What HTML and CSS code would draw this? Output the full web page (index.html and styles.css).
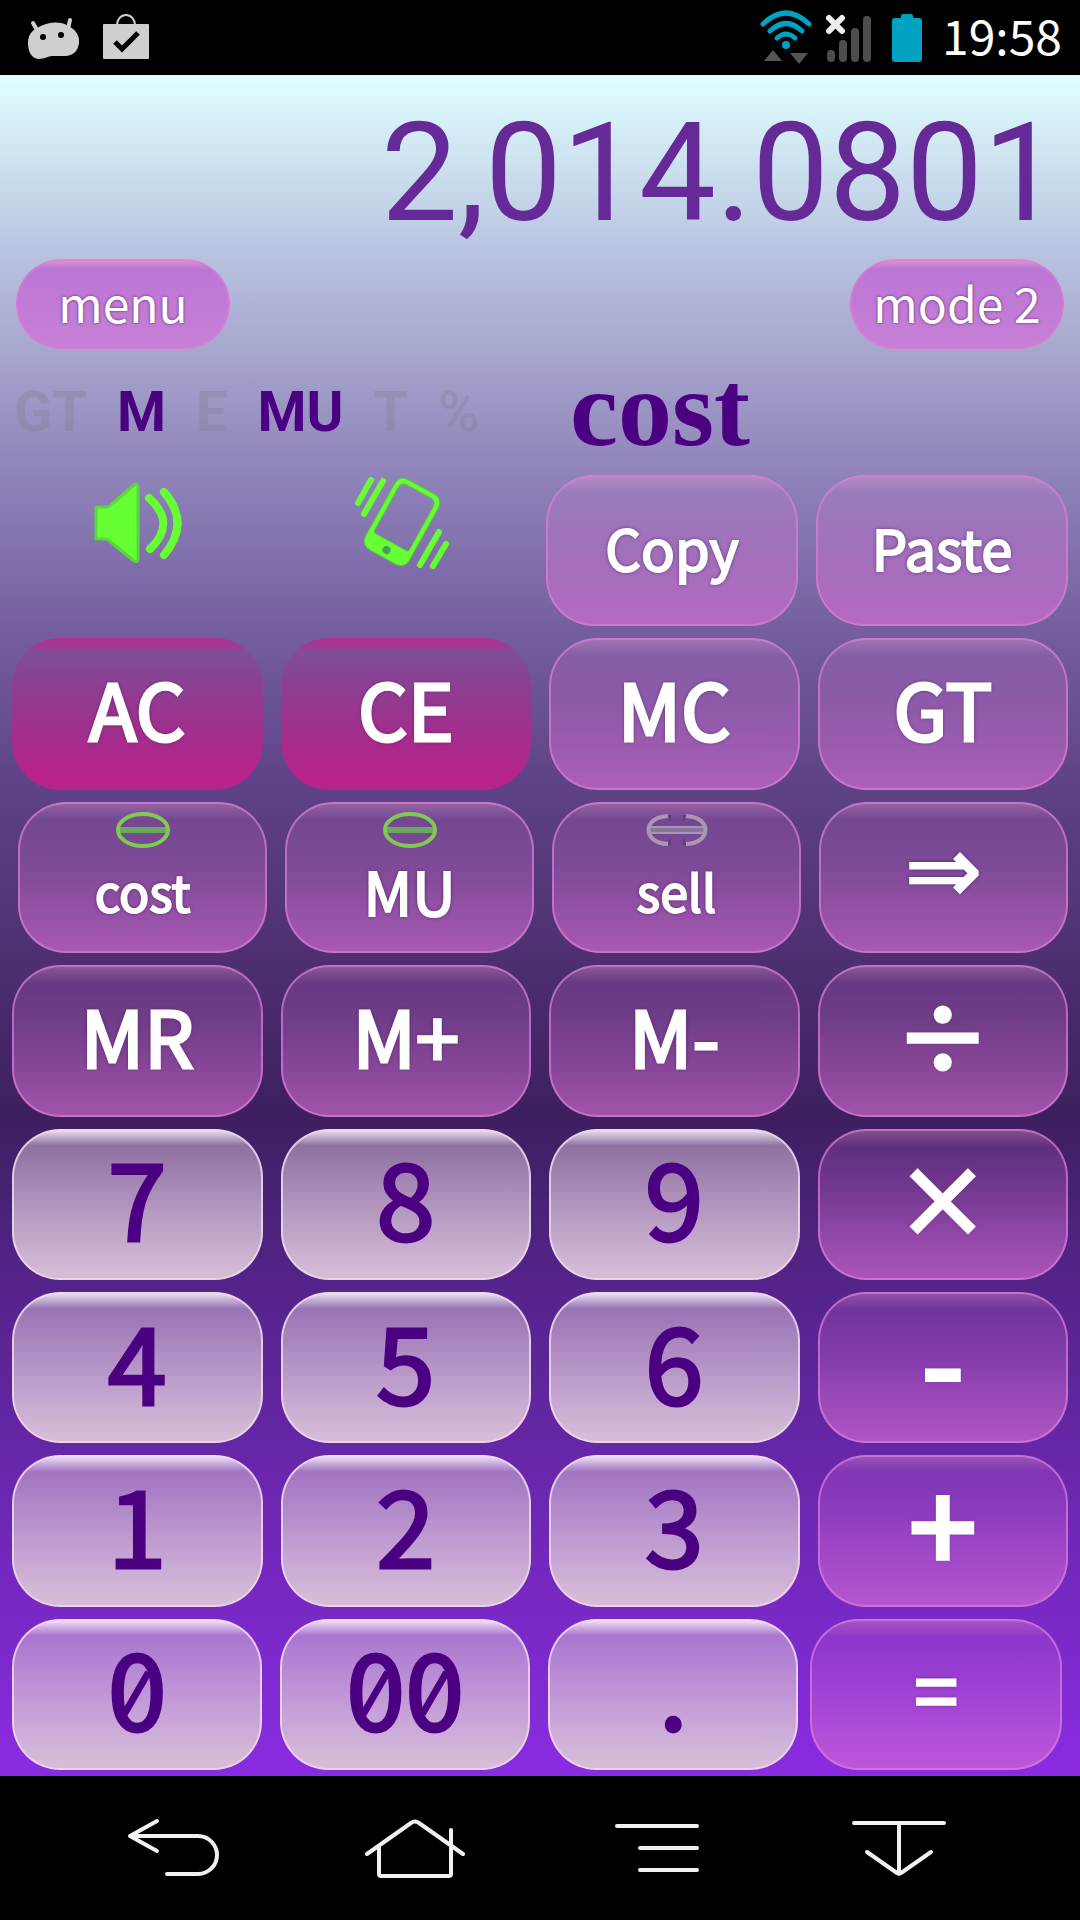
FILE: index.html
```html
<!DOCTYPE html>
<html lang="en">
<head>
    <meta charset="UTF-8">
    <meta name="viewport" content="width=device-width, initial-scale=1.0">
    <title>Calculator</title>
    <link rel="stylesheet" href="styles.css">
</head>
<body>
    <header class="status-bar">
        <div class="status-group">
            <svg width="54" height="42" viewBox="0 0 54 42">
                <path d="M7 6l4 7M44 3l-2 9" stroke="#cfcfcf" stroke-width="4" stroke-linecap="round"/>
                <path d="M2 26C2 16 8 12 15 9c8-4 20-5 27 0 7 3 12 9 11 17-1 8-6 13-14 13H26c-4 0-6 3-14 3C5 41 2 34 2 26z" fill="#cfcfcf"/>
                <circle cx="17" cy="20" r="3"/>
                <circle cx="35" cy="18" r="3"/>
            </svg>
            <svg width="48" height="52" viewBox="0 0 48 52">
                <path d="M15 13a9 10 0 0 1 18 0" fill="none" stroke="#cfcfcf" stroke-width="2"/>
                <rect x="1" y="12" width="46" height="35" rx="1" fill="#cfcfcf"/>
                <path d="M13 30l7 7 16-16" fill="none" stroke="#000" stroke-width="5"/>
            </svg>
        </div>
        <div class="status-group">
            <svg width="52" height="56" viewBox="0 0 52 56">
                <g fill="none" stroke="#00a2c2" stroke-width="5" stroke-linecap="round">
                    <path d="M3 14q23-22 46 0"/>
                    <path d="M10 21q16-15 32 0"/>
                    <path d="M17 28q9-8 18 0"/>
                </g>
                <circle cx="26" cy="35" r="4" fill="#00a2c2"/>
                <path d="M4 51l9-11 9 11zM30 43h18l-9 11z" fill="#555"/>
            </svg>
            <svg width="48" height="50" viewBox="0 0 48 50">
                <path d="M5 41v4M17 31v14M29 19v26M41 7v38" stroke="#4d4d4d" stroke-width="8" stroke-linecap="round"/>
                <path d="M3 5l13 13M16 5L3 18" stroke="#eee" stroke-width="6" stroke-linecap="round"/>
            </svg>
            <svg class="battery" width="30" height="48" viewBox="0 0 30 48">
                <rect x="9" width="12" height="8" rx="2" fill="#00a2c2"/>
                <rect y="4" width="30" height="44" rx="3" fill="#00a2c2"/>
            </svg>
            <time class="clock">19:58</time>
        </div>
    </header>

    <main class="calculator">
        <output class="display">2,014.0801</output>

        <div class="toolbar">
            <button class="pill">menu</button>
            <button class="pill">mode 2</button>
        </div>

        <div class="info">
            <div class="flags">
                <span>GT</span>
                <span class="on">M</span>
                <span>E</span>
                <span class="on">MU</span>
                <span>T</span>
                <span class="percent">%</span>
            </div>
            <div class="mode-name">cost</div>
        </div>

        <div class="keypad">
            <div class="row row-tools">
                <button class="toggle" aria-label="Sound">
                    <svg width="104" height="96" viewBox="-8 0 104 96">
                        <path d="M8 32h10q3 0 6-3L46 10q4-2 4 2v72q0 4-4 2L24 68q-4-4-7-4H8z" fill="#66ff33" stroke="#5cd63f" stroke-width="3" stroke-linejoin="round"/>
                        <path d="M61 23q28 25 1 51M76 17q27 31 0 63" fill="none" stroke="#66ff33" stroke-width="8" stroke-linecap="round"/>
                    </svg>
                </button>
                <button class="toggle" aria-label="Vibration">
                    <svg width="98" height="96" viewBox="0 0 98 96">
                        <g transform="translate(49 47) rotate(29)">
                            <path fill-rule="evenodd" fill="#66ff33" stroke="#5bc83f" stroke-width="1" d="M-14-40h28q11 0 11 11v58q0 11-11 11h-28q-11 0-11-11v-58q0-11 11-11zM-13-35q-7 0-7 7v48q0 3 3 3h34q3 0 3-3v-48q0-7-7-7z"/>
                            <circle cy="32" r="4" fill="#4f9a56"/>
                        </g>
                        <path d="M18 5L5 28M30 6L11 39M86 57L67 90M93 69L80 91" stroke="#66ff33" stroke-width="6" stroke-linecap="round"/>
                    </svg>
                </button>
                <button class="key key-word">Copy</button>
                <button class="key key-word">Paste</button>
            </div>

            <div class="row">
                <button class="key key-clear">AC</button>
                <button class="key key-clear">CE</button>
                <button class="key">MC</button>
                <button class="key">GT</button>
            </div>

            <div class="row row-business">
                <button class="key key-lamp">
                    <svg width="54" height="36" viewBox="0 0 54 36">
                        <path d="M3 18h48" stroke="#69a960" stroke-width="6"/>
                        <ellipse cx="27" cy="18" rx="25" ry="16" fill="none" stroke="#7fca51" stroke-width="4"/>
                    </svg>
                    <span class="small">cost</span>
                </button>
                <button class="key key-lamp">
                    <svg width="54" height="36" viewBox="0 0 54 36">
                        <path d="M3 18h48" stroke="#69a960" stroke-width="6"/>
                        <ellipse cx="27" cy="18" rx="25" ry="16" fill="none" stroke="#7fca51" stroke-width="4"/>
                    </svg>
                    <span>MU</span>
                </button>
                <button class="key key-lamp">
                    <svg width="62" height="36" viewBox="0 0 62 36">
                        <path d="M4 18h54" stroke="#8d749e" stroke-width="7"/>
                        <path d="M4 15h54M4 21h54" stroke="#a795b1" stroke-width="2"/>
                        <path d="M21 4h3v5M38 9V4h3M21 32h3v-5M38 27v5h3" fill="none" stroke="#5f3d78" stroke-width="2"/>
                        <path d="M22 4C-4 5-4 31 22 32M40 4c26 1 26 27 0 28" fill="none" stroke="#aa98b0" stroke-width="4"/>
                    </svg>
                    <span class="small">sell</span>
                </button>
                <button class="key key-arrow">⇒</button>
            </div>

            <div class="row">
                <button class="key">MR</button>
                <button class="key">M+</button>
                <button class="key">M-</button>
                <button class="key key-op">÷</button>
            </div>

            <div class="row">
                <button class="key key-digit">7</button>
                <button class="key key-digit">8</button>
                <button class="key key-digit">9</button>
                <button class="key key-op">×</button>
            </div>

            <div class="row">
                <button class="key key-digit">4</button>
                <button class="key key-digit">5</button>
                <button class="key key-digit">6</button>
                <button class="key key-op key-sign">-</button>
            </div>

            <div class="row">
                <button class="key key-digit">1</button>
                <button class="key key-digit">2</button>
                <button class="key key-digit">3</button>
                <button class="key key-op key-sign">+</button>
            </div>

            <div class="row row-last">
                <div class="digits">
                    <button class="key key-digit"><span class="zero">0</span></button>
                    <button class="key key-digit"><span class="zero">0</span><span class="zero">0</span></button>
                    <button class="key key-digit">.</button>
                </div>
                <button class="key">=</button>
            </div>
        </div>
    </main>

    <nav class="nav-bar">
        <button class="nav-btn" aria-label="Back">
            <svg width="92" height="60" viewBox="0 0 92 60">
                <path d="M30 3L3 18l27 15M3 18h68a19 19 0 0 1 0 38H40"/>
            </svg>
        </button>
        <button class="nav-btn" aria-label="Home">
            <svg width="100" height="60" viewBox="0 0 100 60">
                <path d="M2 36L46 5q4-3 8 0l44 31M14 29v27q0 2 2 2h68q2 0 2-2V12"/>
            </svg>
        </button>
        <button class="nav-btn" aria-label="Menu">
            <svg width="84" height="52" viewBox="0 0 84 52">
                <path d="M2 4h80M25 26h57M25 48h57"/>
            </svg>
        </button>
        <button class="nav-btn" aria-label="Hide">
            <svg width="94" height="58" viewBox="0 0 94 58">
                <path d="M2 4h90M47 4v51M15 33l30 21q2 1 4 0l30-21"/>
            </svg>
        </button>
    </nav>
</body>
</html>
```
FILE: styles.css
```css
* {
    box-sizing: border-box;
}

body {
    margin: 0;
    min-height: 100vh;
    display: flex;
    flex-direction: column;
    background-color: #000;
    font-family: "Noto Sans CJK JP", sans-serif;
    color: #fff;
}

button {
    border: none;
    background: none;
    padding: 0;
    font-family: inherit;
    color: inherit;
    cursor: pointer;
}

svg {
    display: block;
}

/* Status bar */
.status-bar {
    height: 75px;
    padding: 0 18px 0 26px;
    display: flex;
    justify-content: space-between;
    align-items: center;
}

.status-group {
    display: flex;
    align-items: center;
    gap: 22px;
}

.status-group:last-child {
    gap: 14px;
}

.battery {
    margin: 0 6px 0 4px;
}

.clock {
    padding-bottom: 8px;
    font-size: 48px;
    line-height: 60px;
}

/* Calculator */
.calculator {
    flex: 1;
    display: flex;
    flex-direction: column;
    background: linear-gradient(#e0ffff 0%, #bac6e1 10%, #9489bd 22%, #735d9f 33%, #5e4186 42%, #3e1f60 61%, #54248a 71%, #8a2be2 100%);
}

.display {
    padding: 16px 20px 4px;
    font-family: Roboto, sans-serif;
    font-size: 137px;
    line-height: 164px;
    text-align: right;
    color: #652a97;
}

.toolbar {
    display: flex;
    justify-content: space-between;
    padding: 0 16px;
}

.pill {
    width: 214px;
    height: 90px;
    border: 2px solid rgba(233, 120, 212, 0.6);
    border-radius: 45px;
    padding-bottom: 4px;
    background: linear-gradient(rgba(236, 170, 215, 0.7), rgba(236, 170, 215, 0) 10px), linear-gradient(#b975d6, #c880d6);
    background-origin: border-box;
    font-size: 48px;
    line-height: 60px;
    text-shadow: 0 0 3px rgba(60, 20, 80, 0.8);
}

.info {
    display: grid;
    grid-template-columns: 1fr 1fr;
    align-items: center;
    height: 126px;
    font-weight: bold;
    color: #4b0082;
}

.flags {
    display: flex;
    gap: 30px;
    padding-left: 14px;
    font-family: Roboto, sans-serif;
    font-size: 56px;
    color: rgba(128, 128, 150, 0.35);
}

.flags .on {
    color: #4b0082;
}

.flags .percent {
    font-weight: 500;
}

.mode-name {
    padding-left: 30px;
    font-family: "Liberation Serif", serif;
    font-size: 108px;
    line-height: 100px;
    padding-bottom: 6px;
}

/* Keys */
.keypad {
    flex: 1;
    display: grid;
    grid-auto-rows: 1fr;
    gap: 12px;
    padding-bottom: 6px;
}

.row {
    display: grid;
    grid-template-columns: repeat(4, 1fr);
    gap: 18px;
    padding: 0 12px;
}

.row-tools {
    padding-left: 6px;
}

.row-business {
    padding-left: 18px;
}

.row-last {
    grid-template-columns: 25fr 8fr;
    gap: 12px;
    padding-right: 18px;
}

.digits {
    display: grid;
    grid-template-columns: repeat(3, 1fr);
    gap: 18px;
}

.toggle {
    display: flex;
    align-items: flex-start;
    justify-content: center;
}

.key {
    border: 2px solid rgba(218, 125, 220, 0.7);
    border-radius: 48px;
    padding-bottom: 14px;
    background: linear-gradient(rgba(230, 160, 200, 0.35), rgba(230, 160, 200, 0) 18px), linear-gradient(rgba(218, 112, 214, 0.15), rgba(218, 112, 214, 0.3) 40%, rgba(218, 112, 214, 0.65));
    background-origin: border-box;
    font-size: 78px;
    line-height: 88px;
    text-shadow: 0 0 4px rgba(40, 10, 60, 0.8);
    -webkit-text-stroke: 3px currentColor;
}

.key-word {
    padding-bottom: 8px;
    font-size: 56px;
    -webkit-text-stroke-width: 2px;
}

.key-clear {
    border: none;
    background: linear-gradient(rgba(199, 35, 143, 0.7), rgba(199, 35, 143, 0.55) 8px, rgba(199, 35, 143, 0) 14px), linear-gradient(rgba(199, 21, 133, 0.1), rgba(199, 30, 140, 0.85) 90%);
}

.key-digit {
    border-color: rgba(240, 215, 235, 0.85);
    padding-bottom: 18px;
    background: linear-gradient(rgba(255, 250, 255, 0.9), rgba(240, 240, 255, 0) 17px), linear-gradient(rgba(216, 191, 216, 0.45), rgba(216, 191, 216, 0.98) 95%);
    background-origin: border-box;
    font-size: 106px;
    color: #4b0082;
    text-shadow: none;
}

.zero {
    display: inline-block;
    position: relative;
}

/* slash through the zero */
.zero::after {
    content: "";
    position: absolute;
    top: 50%;
    left: 50%;
    width: 7px;
    height: 48px;
    margin: -16px 0 0 -4px;
    background-color: #4b0082;
    transform: rotate(30deg);
}

.key-lamp {
    display: flex;
    flex-direction: column;
    align-items: center;
    padding: 8px 0 0;
    font-size: 60px;
    line-height: 84px;
    -webkit-text-stroke-width: 2px;
}

.key-lamp .small {
    font-size: 50px;
}

.key-arrow {
    padding-bottom: 12px;
    font-family: "DejaVu Sans", sans-serif;
    font-size: 92px;
    -webkit-text-stroke-width: 2px;
}

.key-op {
    padding-bottom: 16px;
    font-size: 92px;
    -webkit-text-stroke-width: 5px;
}

.key-sign {
    padding-bottom: 22px;
    font-size: 120px;
}

/* Navigation bar */
.nav-bar {
    height: 144px;
    padding: 0 60px 0 52px;
    display: grid;
    grid-template-columns: repeat(4, 1fr);
}

.nav-btn {
    display: flex;
    align-items: center;
    justify-content: center;
}

.nav-btn path {
    fill: none;
    stroke: #f0f0f0;
    stroke-width: 4;
    stroke-linecap: round;
    stroke-linejoin: round;
}
```
